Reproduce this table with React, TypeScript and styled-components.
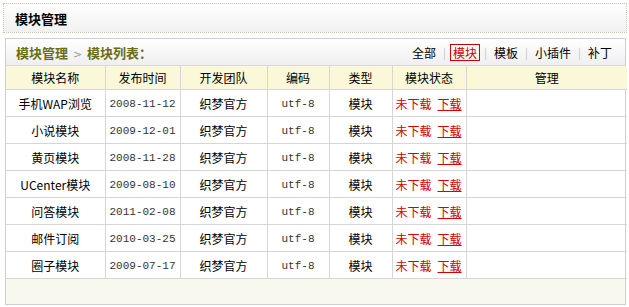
import styled, { createGlobalStyle } from "styled-components";

const GlobalStyle = createGlobalStyle`
  body {
    margin: 0;
    background: #ffffff;
    font-family: "Noto Sans CJK SC", "DejaVu Sans", sans-serif;
    font-size: 12px;
    color: #000;
  }
`;

interface IModule {
  name: string;
  date: string;
  team: string;
  charset: string;
  type: string;
}

const modules: IModule[] = [
  { name: "手机WAP浏览", date: "2008-11-12", team: "织梦官方", charset: "utf-8", type: "模块" },
  { name: "小说模块", date: "2009-12-01", team: "织梦官方", charset: "utf-8", type: "模块" },
  { name: "黄页模块", date: "2008-11-28", team: "织梦官方", charset: "utf-8", type: "模块" },
  { name: "UCenter模块", date: "2009-08-10", team: "织梦官方", charset: "utf-8", type: "模块" },
  { name: "问答模块", date: "2011-02-08", team: "织梦官方", charset: "utf-8", type: "模块" },
  { name: "邮件订阅", date: "2010-03-25", team: "织梦官方", charset: "utf-8", type: "模块" },
  { name: "圈子模块", date: "2009-07-17", team: "织梦官方", charset: "utf-8", type: "模块" },
];

const tabs = ["全部", "模块", "模板", "小插件", "补丁"];

const colWidths = [99, 75, 87, 62, 63, 74, 161];
const headers = ["模块名称", "发布时间", "开发团队", "编码", "类型", "模块状态", "管理"];

function App() {
  return (
    <Page>
      <GlobalStyle />
      <TitleBox>
        <Title>模块管理</Title>
      </TitleBox>
      <Panel>
        <Crumb>
          <CrumbText>
            模块管理 <Arrow>&gt;</Arrow> 模块列表：
          </CrumbText>
          <Tabs>
            {tabs.map((t, i) => (
              <TabItem key={t}>
                {i > 0 && <Sep>|</Sep>}
                <Tab isActive={t === "模块"}>{t}</Tab>
              </TabItem>
            ))}
          </Tabs>
        </Crumb>
        <Table>
          <colgroup>
            {colWidths.map((w, i) => (
              <col key={i} style={{ width: w }} />
            ))}
          </colgroup>
          <thead>
            <tr>
              {headers.map((h) => (
                <Th key={h}>{h}</Th>
              ))}
            </tr>
          </thead>
          <tbody>
            {modules.map((m) => (
              <tr key={m.name}>
                <Td>{m.name}</Td>
                <MonoTd>{m.date}</MonoTd>
                <Td>{m.team}</Td>
                <MonoTd>{m.charset}</MonoTd>
                <Td>{m.type}</Td>
                <StatusTd>
                  <Status>未下载</Status>
                  <DownLink href="#">下载</DownLink>
                </StatusTd>
                <Td></Td>
              </tr>
            ))}
          </tbody>
        </Table>
        <Footer />
      </Panel>
    </Page>
  );
}

const Page = styled.div`
  padding: 3px 2px 0 3px;
  width: 624px;
`;

const TitleBox = styled.div`
  height: 28px;
  border: 1px dotted #c9cba4;
  background: linear-gradient(#ffffff, #f1f1f1);
  display: flex;
  align-items: center;
  padding-left: 11px;
`;

const Title = styled.h1`
  margin: 0;
  font-size: 13px;
  font-weight: bold;
  color: #000;
`;

const Panel = styled.div`
  margin: 5px 0 0 2px;
  width: 619px;
  border: 1px solid #cfcfcf;
`;

const Crumb = styled.div`
  height: 26px;
  display: flex;
  align-items: center;
  justify-content: space-between;
  padding: 0 10px 0 10px;
  background: linear-gradient(#ffffff, #efefef);
  border-bottom: 1px solid #d9d9d9;
`;

const CrumbText = styled.div`
  font-size: 13px;
  font-weight: bold;
  color: #6b6b14;
`;

const Arrow = styled.span`
  font-weight: normal;
  color: #999;
  font-family: "DejaVu Sans", sans-serif;
  font-size: 11px;
  margin: 0 2px;
`;

const Tabs = styled.div`
  display: flex;
  align-items: center;
  font-size: 12px;
`;

const TabItem = styled.span`
  display: flex;
  align-items: center;
`;

const Sep = styled.span`
  color: #c4c4c4;
  margin: 0 4px;
  font-size: 11px;
`;

const Tab = styled.span<{ isActive: boolean }>`
  padding: 0 2px;
  line-height: 15px;
  border: 1px solid ${(props) => (props.isActive ? "#cc0000" : "transparent")};
  color: ${(props) => (props.isActive ? "#cc0000" : "#000")};
`;

const Table = styled.table`
  width: 619px;
  table-layout: fixed;
  border-collapse: collapse;
`;

const Th = styled.th`
  height: 23px;
  padding: 0;
  font-weight: normal;
  font-size: 12px;
  background: #fbf8da;
  border-left: 1px solid #d6d6d6;
  border-bottom: 1px solid #d6d6d6;
  &:first-child {
    border-left: none;
  }
`;

const Td = styled.td`
  height: 26px;
  padding: 0;
  text-align: center;
  font-size: 12px;
  border-left: 1px solid #d6d6d6;
  border-bottom: 1px solid #d6d6d6;
  &:first-child {
    border-left: none;
  }
`;

const MonoTd = styled(Td)`
  font-family: "Liberation Mono", "DejaVu Sans Mono", monospace;
  font-size: 11px;
  color: #333;
  height: 24px;
  padding-top: 2px;
`;

const StatusTd = styled(Td)`
  text-align: left;
  padding-left: 3px;
`;

const Status = styled.span`
  color: #d40000;
  margin-right: 6px;
`;

const DownLink = styled.a`
  color: #d40000;
  text-decoration: underline;
`;

const Footer = styled.div`
  height: 25px;
  background: #f8f8ee;
`;

export default App;
